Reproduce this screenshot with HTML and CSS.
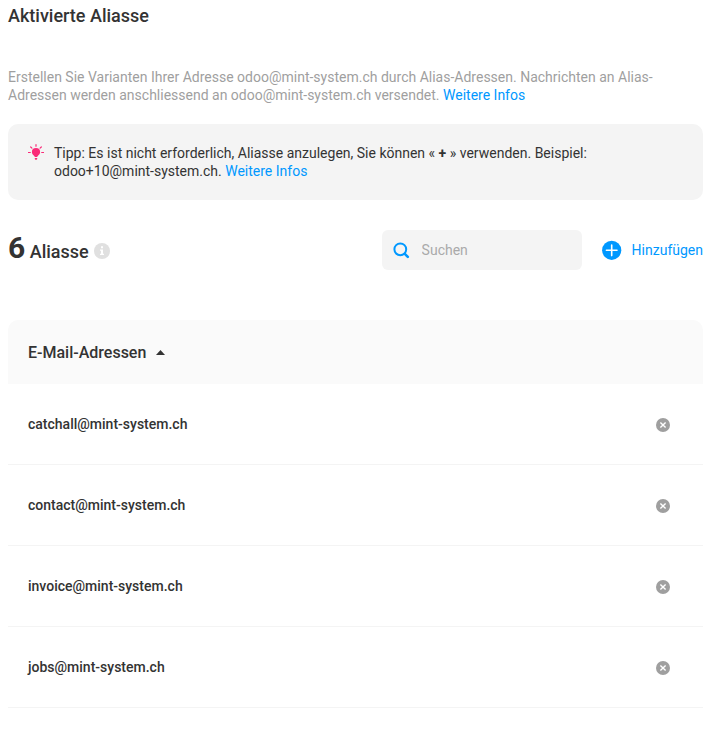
FILE: index.html
```html
<!DOCTYPE html>
<html lang="de">
<head>
<meta charset="utf-8">
<title>Aktivierte Aliasse</title>
<link rel="stylesheet" href="styles.css">
</head>
<body>
<main>
  <h1>Aktivierte Aliasse</h1>
  <p class="intro">Erstellen Sie Varianten Ihrer Adresse odoo@mint-system.ch durch Alias-Adressen. Nachrichten an Alias-Adressen werden anschliessend an odoo@mint-system.ch versendet. <a href="#">Weitere Infos</a></p>
  <aside class="tip">
    <svg class="bulb" width="16" height="16" viewBox="0 0 16 16" fill="#fa2a78"><path d="M8 4a4.1 4.1 0 0 0-4.1 4.1c0 1.7 1 3 2.3 3.8.4.3.6.7.6 1.1h2.4c0-.4.2-.8.6-1.1 1.3-.8 2.3-2.1 2.3-3.8A4.1 4.1 0 0 0 8 4zM6.8 14h2.4v.8c0 .6-.5 1-1.2 1s-1.2-.4-1.2-1z"/><path d="M8 .7v1.5M2.7 3l1.2 1.1M13.3 3l-1.2 1.1M.5 8.5h1.8M13.7 8.5h1.8" stroke="#fa2a78" stroke-width="1.2" stroke-linecap="round"/></svg>
    <p>Tipp: Es ist nicht erforderlich, Aliasse anzulegen, Sie können « <b>+</b> » verwenden. Beispiel: odoo+10@mint-system.ch. <a href="#">Weitere Infos</a></p>
  </aside>
  <div class="toolbar">
    <h2><span class="count">6</span> Aliasse</h2>
    <svg class="info" width="16" height="16" viewBox="0 0 16 16"><circle cx="8" cy="8" r="8" fill="#e0e0e0"/><path d="M7 3.3h2v2H7zM6 6.5h3v4.3h1V12H6v-1.2h1V7.7H6z" fill="#fff"/></svg>
    <label class="search">
      <svg width="17" height="17" viewBox="0 0 17 17" fill="none" stroke="#0098ff"><circle cx="7.3" cy="7.3" r="5.9" stroke-width="2"/><path d="M11.8 11.8l3 3" stroke-width="2.6" stroke-linecap="round"/></svg>
      <input type="text" placeholder="Suchen">
    </label>
    <a class="add" href="#"><svg width="20" height="20" viewBox="0 0 20 20"><circle cx="9.7" cy="10.3" r="9.6" fill="#0098ff"/><path d="M9.7 5v10.6M4.4 10.3H15" stroke="#fff" stroke-width="1.6" stroke-linecap="round"/></svg>Hinzufügen</a>
  </div>
  <section>
    <header class="table-head">E-Mail-Adressen <svg width="9" height="5" viewBox="0 0 9 5"><path d="M0 5L4.5 0 9 5z" fill="#333"/></svg></header>
    <ul>
      <li>catchall@mint-system.ch <svg width="14" height="14" viewBox="0 0 14 14"><circle cx="7" cy="7" r="7" fill="#9f9f9f"/><path d="M4.4 4.4l5.2 5.2M9.6 4.4L4.4 9.6" stroke="#fff" stroke-width="1.4"/></svg></li>
      <li>contact@mint-system.ch <svg width="14" height="14" viewBox="0 0 14 14"><circle cx="7" cy="7" r="7" fill="#9f9f9f"/><path d="M4.4 4.4l5.2 5.2M9.6 4.4L4.4 9.6" stroke="#fff" stroke-width="1.4"/></svg></li>
      <li>invoice@mint-system.ch <svg width="14" height="14" viewBox="0 0 14 14"><circle cx="7" cy="7" r="7" fill="#9f9f9f"/><path d="M4.4 4.4l5.2 5.2M9.6 4.4L4.4 9.6" stroke="#fff" stroke-width="1.4"/></svg></li>
      <li>jobs@mint-system.ch <svg width="14" height="14" viewBox="0 0 14 14"><circle cx="7" cy="7" r="7" fill="#9f9f9f"/><path d="M4.4 4.4l5.2 5.2M9.6 4.4L4.4 9.6" stroke="#fff" stroke-width="1.4"/></svg></li>
    </ul>
  </section>
</main>
</body>
</html>
```
FILE: styles.css
```css
* { box-sizing: border-box; }
body { margin: 0; background: #fff; color: #333; font: 14px/18px Roboto, sans-serif; }
main { width: 695px; margin-left: 8px; padding-top: 4px; }
h1, h2, p, ul { margin: 0; padding: 0; }
h1 { font-size: 18px; line-height: 24px; font-weight: 500; }
a { color: #0098ff; text-decoration: none; }
svg { display: block; flex: none; }
.intro { margin-top: 40px; color: #9f9f9f; }
.tip { display: flex; gap: 10px; height: 76px; margin-top: 20px; padding: 20px; border-radius: 10px; background: #f4f4f4; }
.tip p { max-width: 560px; }
.toolbar { display: flex; align-items: center; height: 40px; margin-top: 30px; }
h2 { font-size: 18px; line-height: 40px; font-weight: 500; }
.count { font-size: 30px; font-weight: 700; }
.info { margin: 2px 0 0 5px; }
.search { display: flex; align-items: center; gap: 12px; width: 200px; height: 40px; margin-left: auto; padding: 0 11px; border-radius: 6px; background: #f4f4f4; }
.search input { width: 130px; padding: 0; border: 0; outline: 0; background: transparent; font: inherit; }
.search input::placeholder { color: #aaa; opacity: 1; }
.add { display: flex; align-items: center; gap: 10px; margin-left: 20px; }
.table-head { display: flex; align-items: center; gap: 10px; height: 64px; margin-top: 50px; padding: 0 20px; border-radius: 10px 10px 0 0; background: #fafafa; font-size: 16px; line-height: 19px; font-weight: 500; }
li { display: flex; align-items: center; justify-content: space-between; height: 81px; padding: 0 33px 0 20px; border-bottom: 1px solid #f4f4f4; font-weight: 500; }
li svg { margin-top: 2px; }
```
